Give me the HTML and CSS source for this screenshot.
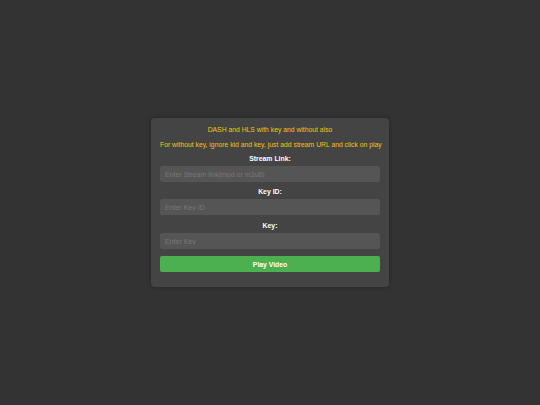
FILE: index.html
```html
<!DOCTYPE html>
<html lang="en">
<head>
<meta charset="utf-8">
<title>Player</title>
<link rel="stylesheet" href="styles.css">
</head>
<body>
<div class="page">
  <form class="card">
    <p class="note note-first">DASH and HLS with key and without also</p>
    <p class="note note-second">For without key, ignore kid and key, just add stream URL and click on play</p>
    <label class="label label-first" for="stream">Stream Link:</label>
    <input class="field" id="stream" type="text" placeholder="Enter Stream link(mpd or m3u8)">
    <label class="label" for="kid">Key ID:</label>
    <input class="field" id="kid" type="text" placeholder="Enter Key ID">
    <label class="label label-last" for="key">Key:</label>
    <input class="field" id="key" type="text" placeholder="Enter Key">
    <button class="play" type="button">Play Video</button>
  </form>
</div>
</body>
</html>
```

FILE: styles.css
```css
* { box-sizing: border-box; }
html, body { margin: 0; padding: 0; }
body {
  background: #333333;
  font-family: "Liberation Sans", Arial, sans-serif;
  width: 540px;
  height: 405px;
}
.page {
  height: 405px;
  display: flex;
  align-items: center;
  justify-content: center;
}
.card {
  width: 238px;
  height: 169px;
  background: #444444;
  border-radius: 4px;
  padding: 8px 9px 15px;
  display: flex;
  flex-direction: column;
  box-shadow: 0 0 5px rgba(0,0,0,0.25);
}
.note {
  margin: 0;
  font-size: 6.8px;
  line-height: 8px;
  color: #f1c40f;
  text-align: center;
  white-space: nowrap;
}
.note-second { margin-top: 7px; }
.label {
  display: block;
  text-align: center;
  color: #ffffff;
  font-weight: bold;
  font-size: 6.9px;
  line-height: 9px;
  margin-top: 5px;
  margin-bottom: 3px;
}
.label-first { margin-top: 5px; }
.label-last { margin-top: 6px; }
.field {
  display: block;
  width: 220px;
  height: 16px;
  margin: 0;
  padding: 0 4px;
  border: 1px solid #555555;
  border-radius: 2px;
  background: #555555;
  color: #ffffff;
  font-family: "Liberation Sans", Arial, sans-serif;
  font-size: 7px;
  outline: none;
}
.field::placeholder { color: #787878; }
.play {
  display: block;
  width: 220px;
  height: 16px;
  margin-top: 7px;
  padding: 0;
  border: none;
  border-radius: 2px;
  background: #4caf50;
  color: #ffffff;
  font-family: "Liberation Sans", Arial, sans-serif;
  font-size: 6.8px;
  font-weight: bold;
}
```
